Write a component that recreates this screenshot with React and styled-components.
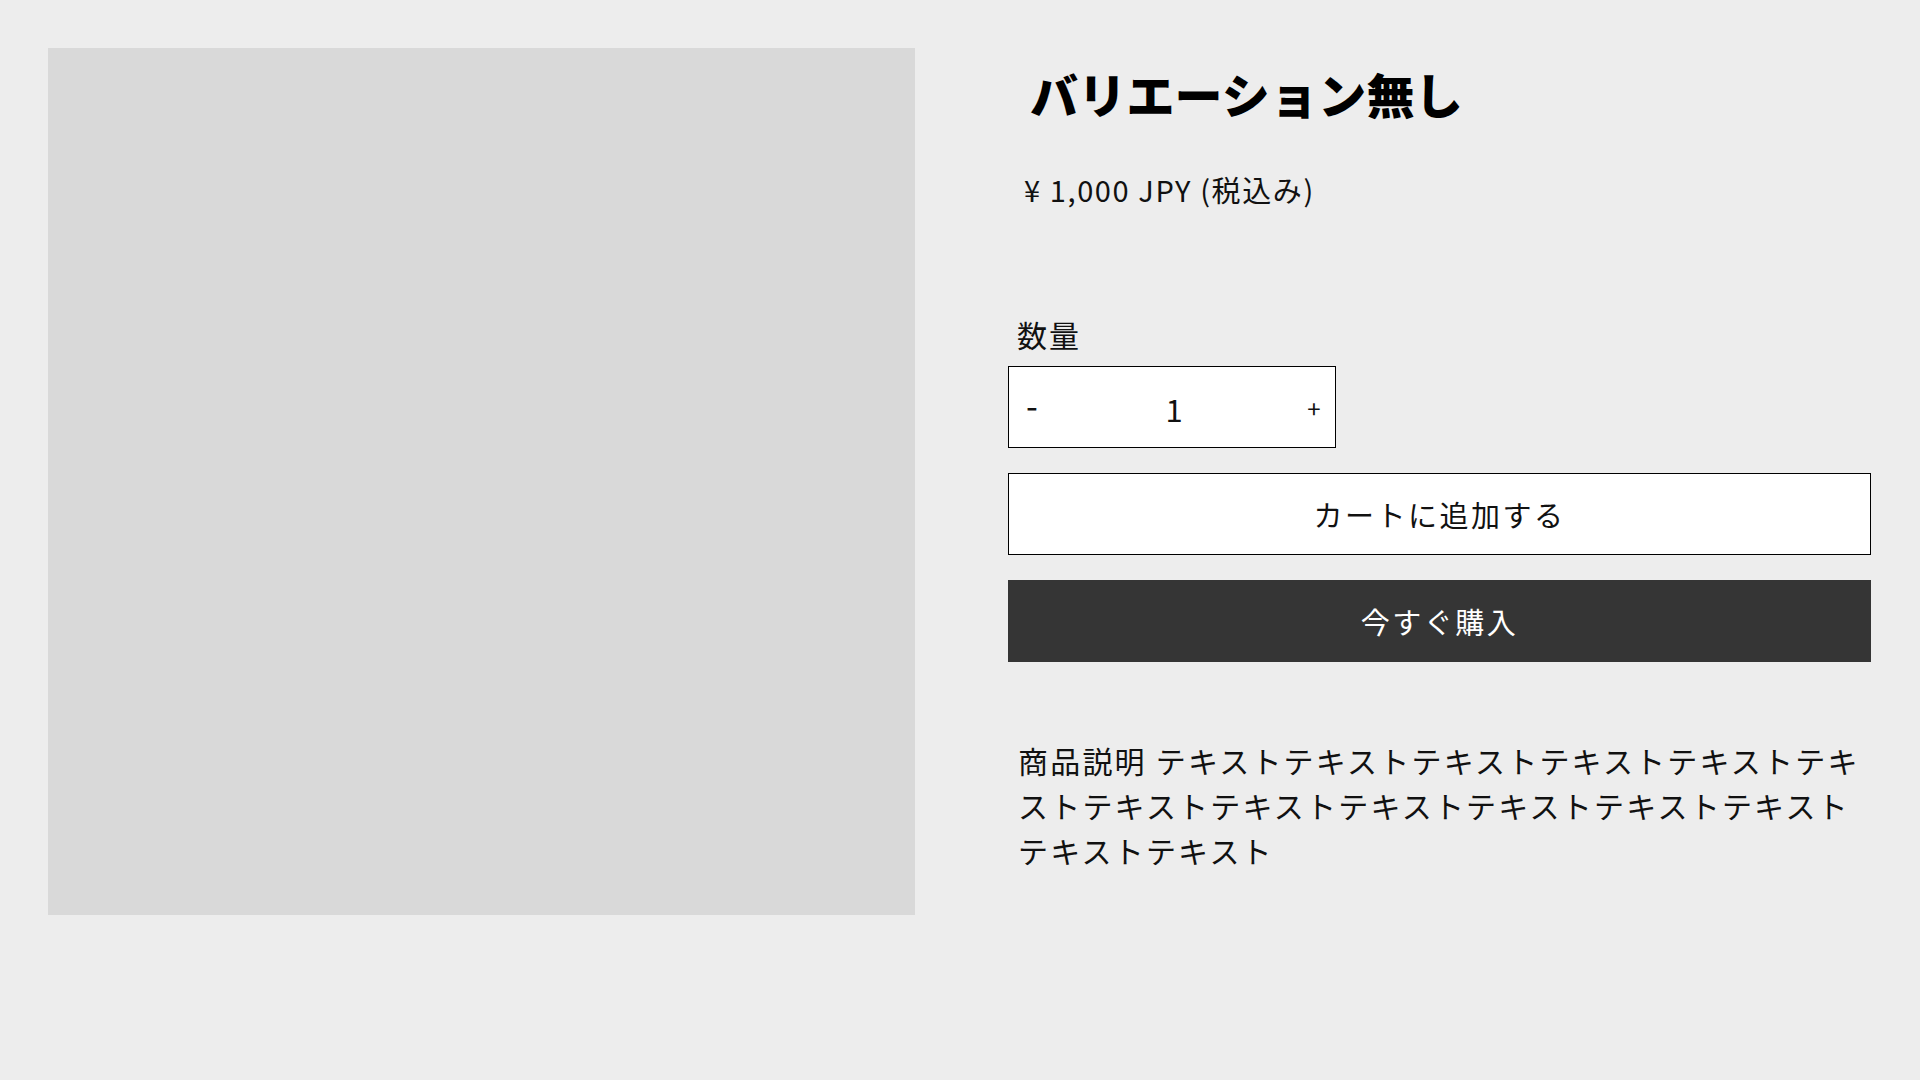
import React, { useState } from "react";
import styled, { createGlobalStyle } from "styled-components";

const Global = createGlobalStyle`
  html, body { margin: 0; padding: 0; background: #ededed; }
  body { font-family: "Noto Sans CJK JP", "Noto Sans", sans-serif; color: #111; }
  * { box-sizing: border-box; }
`;

const Page = styled.main`
  display: grid;
  grid-template-columns: 867px 1fr;
  column-gap: 93px;
  padding: 48px 49px 48px 48px;
  min-height: 1080px;
`;

const Picture = styled.div`
  width: 867px;
  height: 867px;
  background: #d9d9d9;
`;

const Info = styled.section`
  display: flex;
  flex-direction: column;
`;

const Title = styled.h1`
  margin: 16px 0 0 22px;
  font-size: 48px;
  line-height: 58px;
  font-weight: 900;
  letter-spacing: 0.2px;
  color: #000;
`;

const Price = styled.p`
  margin: 45px 0 0 16px;
  font-size: 29px;
  line-height: 44px;
  font-weight: 400;
  letter-spacing: 1.6px;
`;

const Label = styled.label`
  margin: 101px 0 0 9px;
  font-size: 30px;
  line-height: 45px;
  letter-spacing: 2px;
`;

const Quantity = styled.div`
  margin-top: 9px;
  width: 328px;
  height: 82px;
  display: flex;
  align-items: center;
  background: #fff;
  border: 1px solid #000;
  font-family: "Noto Sans CJK JP", "Noto Sans", sans-serif;
`;

const StepButton = styled.button`
  width: ${(p) => p.$w}px;
  height: 100%;
  padding: 0 0 ${(p) => p.$lift}px 0;
  border: none;
  background: transparent;
  font-family: "Noto Sans CJK JP", "Noto Sans", sans-serif;
  font-size: ${(p) => p.$size}px;
  font-weight: 400;
  color: #111;
  display: flex;
  align-items: center;
  justify-content: center;
  cursor: pointer;
`;

const QtyValue = styled.span`
  flex: 1;
  text-align: center;
  font-family: "Noto Sans CJK JP", "Noto Sans", sans-serif;
  font-size: 31px;
  font-weight: 400;
  line-height: 1;
  padding-top: 3px;
`;

const ActionButton = styled.button`
  margin-top: 25px;
  width: 100%;
  height: 82px;
  border: ${(p) => (p.$dark ? "none" : "1px solid #000")};
  background: ${(p) => (p.$dark ? "#353535" : "#fff")};
  color: ${(p) => (p.$dark ? "#fff" : "#111")};
  font-family: "Noto Sans CJK JP", "Noto Sans", sans-serif;
  font-size: 29px;
  font-weight: 400;
  letter-spacing: 2.5px;
  cursor: pointer;
`;

const Description = styled.p`
  margin: 76px 0 0 10px;
  font-size: 30px;
  line-height: 45px;
  letter-spacing: 2.2px;
  font-weight: 400;
`;

const descriptionText = `商品説明 ${"テキスト".repeat(14)}`;

export default function App() {
  const [qty, setQty] = useState(1);
  return (
    <>
      <Global />
      <Page>
        <Picture />
        <Info>
          <Title>バリエーション無し</Title>
          <Price>¥ 1,000 JPY (税込み)</Price>
          <Label>数量</Label>
          <Quantity>
            <StepButton $w={46} $size={34} $lift={6} onClick={() => setQty(Math.max(1, qty - 1))}>-</StepButton>
            <QtyValue>{qty}</QtyValue>
            <StepButton $w={42} $size={24} $lift={0} onClick={() => setQty(qty + 1)}>+</StepButton>
          </Quantity>
          <ActionButton>カートに追加する</ActionButton>
          <ActionButton $dark>今すぐ購入</ActionButton>
          <Description>{descriptionText}</Description>
        </Info>
      </Page>
    </>
  );
}
